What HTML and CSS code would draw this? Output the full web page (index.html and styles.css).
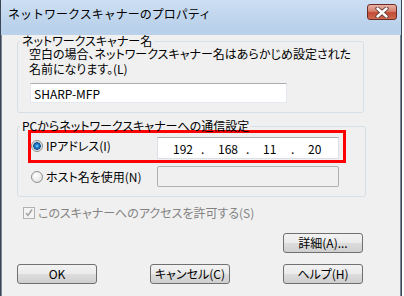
FILE: index.html
```html
<!DOCTYPE html>
<html lang="ja">
<head>
    <meta charset="UTF-8">
    <title>ネットワークスキャナーのプロパティ</title>
    <link rel="stylesheet" href="styles.css">
</head>
<body>
    <div class="window">
        <div class="titlebar">
            <span class="title">ネットワークスキャナーのプロパティ</span>
            <div class="close-btn">
                <svg width="14" height="11" viewBox="0 0 14 11">
                    <path d="M2.5 1.5 L11.5 9.5 M11.5 1.5 L2.5 9.5" stroke="#5a3a36" stroke-width="4.2" stroke-linecap="round"/>
                    <path d="M2.5 1.5 L11.5 9.5 M11.5 1.5 L2.5 9.5" stroke="#fff" stroke-width="2.4" stroke-linecap="round"/>
                </svg>
            </div>
        </div>
        <div class="client">
            <fieldset class="group group-name">
                <legend>ネットワークスキャナー名</legend>
                <p class="desc">空白の場合、ネットワークスキャナー名はあらかじめ設定された<br>名前になります。(L)</p>
                <input class="name-box" type="text" value="SHARP-MFP">
            </fieldset>
            <fieldset class="group group-conn">
                <legend>PCからネットワークスキャナーへの通信設定</legend>
                <div class="ip-row">
                    <label class="option"><span class="radio checked"></span>IPアドレス(I)</label>
                    <div class="ip-box">
                        <span class="octet">192</span><span class="dot">.</span>
                        <span class="octet">168</span><span class="dot">.</span>
                        <span class="octet">11</span><span class="dot">.</span>
                        <span class="octet">20</span>
                    </div>
                </div>
                <div class="host-row">
                    <label class="option"><span class="radio"></span>ホスト名を使用(N)</label>
                    <div class="host-box"></div>
                </div>
            </fieldset>
            <div class="check-row">
                <span class="checkbox">
                    <svg width="10" height="10" viewBox="0 0 10 10">
                        <path d="M2 5 L4 7.5 L8 1.5" fill="none" stroke="#a6a6a6" stroke-width="1.6"/>
                    </svg>
                </span>
                このスキャナーへのアクセスを許可する(S)
            </div>
            <div class="detail-row">
                <button class="btn">詳細(A)...</button>
            </div>
            <div class="button-row">
                <button class="btn">OK</button>
                <button class="btn">キャンセル(C)</button>
                <button class="btn">ヘルプ(H)</button>
            </div>
        </div>
    </div>
</body>
</html>
```

FILE: styles.css
```css
body {
    margin: 0;
    background: #fff;
    font-family: "Noto Sans CJK JP", sans-serif;
    font-size: 12px;
    color: #000;
    font-feature-settings: "palt";
}
.window {
    width: 400px;
    border-left: 1px solid #3b4654;
    border-right: 1px solid #3b4654;
    background: #b9d1ea;
    padding-bottom: 2px;
}
.titlebar {
    height: 27px;
    display: flex;
    align-items: flex-start;
    background: linear-gradient(#cddff3, #b9d1ea);
}
.title {
    margin: 6px 0 0 7px;
    line-height: 15px;
    font-feature-settings: normal;
}
.close-btn {
    margin: 4px 4px 0 auto;
    width: 30px;
    height: 16px;
    box-sizing: border-box;
    border: 1px solid #6a2e26;
    border-radius: 3px;
    background: linear-gradient(#eab1a4, #d5806c 45%, #c24a33 55%, #cf6a50);
    display: flex;
    align-items: center;
    justify-content: center;
}
.client {
    height: 266px;
    background: #f0f0f0;
    border: 1px solid #7a8796;
    border-top: none;
}
.group {
    margin: 0 0 0 15px;
    padding: 0;
    border: 1px solid #d5dfe5;
    border-radius: 3px;
    box-sizing: border-box;
    min-inline-size: 0;
}
.group legend {
    padding: 0 2px;
    line-height: 12px;
}
.group-name {
    margin-top: 8px;
    width: 347px;
    padding: 0 10px 9px 11px;
}
.group-name legend {
    margin-left: -9px;
}
.desc {
    margin: -1px 0 0;
    line-height: 15px;
    white-space: nowrap;
}
.name-box {
    display: block;
    margin: 7px 0 0 1px;
    width: 257px;
    height: 20px;
    box-sizing: border-box;
    border: 1px solid #e3e9ef;
    border-top-color: #abadb3;
    padding: 0 3px;
    font: inherit;
    background: #fff;
}
.group-conn {
    margin-top: 7px;
    width: 349px;
    padding: 0 19px 9px 10px;
}
.group-conn legend {
    margin-left: -8px;
}
.ip-row {
    margin-top: -2px;
    display: flex;
    border: 3px solid #f00;
    padding: 4px 4px 1px 0;
}
.option {
    display: flex;
    align-items: center;
    gap: 3px;
    line-height: 13px;
    white-space: nowrap;
}
.ip-row .option {
    align-self: flex-start;
    margin-top: 2px;
}
.radio {
    width: 12px;
    height: 12px;
    border-radius: 50%;
    box-sizing: border-box;
    border: 1px solid #8e8f8f;
    background: radial-gradient(circle at 40% 35%, #fff, #dadada);
}
.radio.checked {
    background: radial-gradient(circle, #8fd6ff 0, #2a8ad6 1.5px, #0c4f8e 3.5px, #cfcfcf 4px, #f6f6f6 5.5px);
}
.ip-box {
    margin-left: auto;
    width: 182px;
    height: 22px;
    box-sizing: border-box;
    border: 1px solid #dbdfe6;
    border-top-color: #abadb3;
    background: #fff;
    display: flex;
    align-items: center;
    padding-left: 15px;
    line-height: 13px;
}
.octet {
    width: 26px;
}
.dot {
    width: 19px;
    padding-left: 2px;
    box-sizing: border-box;
}
.host-row {
    display: flex;
    align-items: center;
    margin: 3px 7px 0 0;
    padding-left: 3px;
}
.host-box {
    margin-left: auto;
    width: 182px;
    height: 21px;
    box-sizing: border-box;
    border: 1px solid #adb2b5;
    border-radius: 2px;
    background: #f0f0f0;
}
.check-row {
    display: flex;
    align-items: center;
    gap: 3px;
    margin: 9px 0 0 21px;
    color: #838383;
    line-height: 13px;
}
.checkbox {
    width: 12px;
    height: 12px;
    box-sizing: border-box;
    border: 1px solid #b1b1b1;
    background: #f4f4f4;
    display: flex;
    align-items: center;
    justify-content: center;
}
.detail-row {
    display: flex;
    justify-content: flex-end;
    margin: 14px 37px 0 0;
}
.button-row {
    display: flex;
    gap: 53px;
    margin: 11px 0 0 15px;
}
.btn {
    width: 80px;
    height: 20px;
    box-sizing: border-box;
    border: 1px solid #707070;
    border-radius: 3px;
    background: linear-gradient(#f2f2f2 0%, #ebebeb 50%, #dddddd 50%, #cfcfcf 100%);
    font: inherit;
    line-height: 16px;
    padding: 0;
    color: #000;
}
```
